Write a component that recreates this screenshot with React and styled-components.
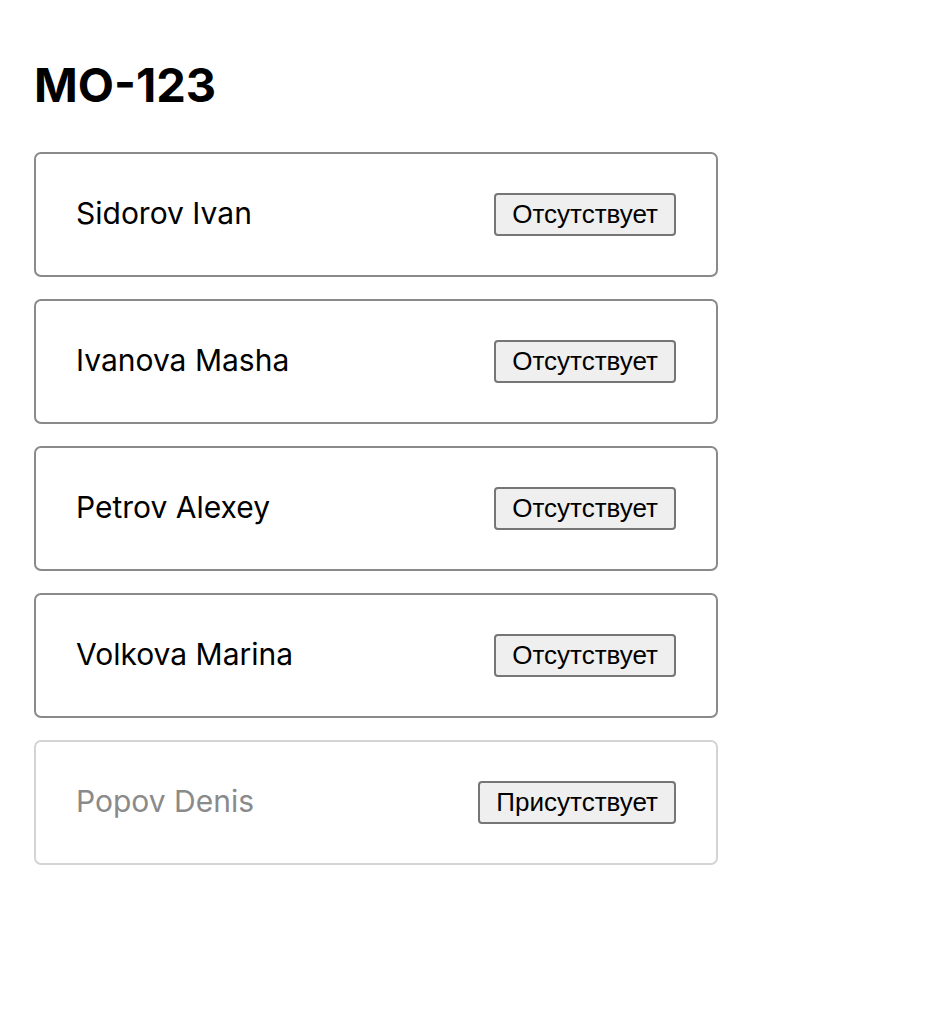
import styled, { createGlobalStyle } from "styled-components";

const students = [
  { name: "Sidorov Ivan", present: false },
  { name: "Ivanova Masha", present: false },
  { name: "Petrov Alexey", present: false },
  { name: "Volkova Marina", present: false },
  { name: "Popov Denis", present: true },
];

const App = () => {
  return (
    <Page>
      <GlobalStyle />
      <Title>MO-123</Title>
      <List>
        {students.map((s) => (
          <Card key={s.name} $present={s.present}>
            <Name $present={s.present}>{s.name}</Name>
            <StatusButton type="button">
              {s.present ? "Присутствует" : "Отсутствует"}
            </StatusButton>
          </Card>
        ))}
      </List>
    </Page>
  );
};

export default App;

const GlobalStyle = createGlobalStyle`
  body {
    margin: 0;
    background: #fff;
    font-family: Inter, "Liberation Sans", sans-serif;
  }
`;

const Page = styled.div`
  padding: 57px 34px 34px;
`;

const Title = styled.h1`
  margin: 0 0 40px;
  font-family: Inter, "Liberation Sans", sans-serif;
  font-size: 47px;
  font-weight: 700;
  color: #000;
  line-height: 55px;
`;

const List = styled.div`
  display: flex;
  flex-direction: column;
  gap: 22px;
  width: 684px;
`;

const Card = styled.div`
  display: flex;
  justify-content: space-between;
  align-items: center;
  box-sizing: border-box;
  height: 125px;
  padding: 0 40px;
  border: 2px solid ${(p) => (p.$present ? "#d4d4d4" : "#8a8a8a")};
  border-radius: 7px;
`;

const Name = styled.span`
  font-size: 30px;
  line-height: 36px;
  margin-bottom: 3px;
  color: ${(p) => (p.$present ? "#8a8a8a" : "#000")};
`;

const StatusButton = styled.button`
  height: 43px;
  padding: 0 16px;
  font-family: "Liberation Sans", Arial, sans-serif;
  font-size: 26px;
  color: #000;
  background: #efefef;
  border: 2px solid #767676;
  border-radius: 4px;
`;
